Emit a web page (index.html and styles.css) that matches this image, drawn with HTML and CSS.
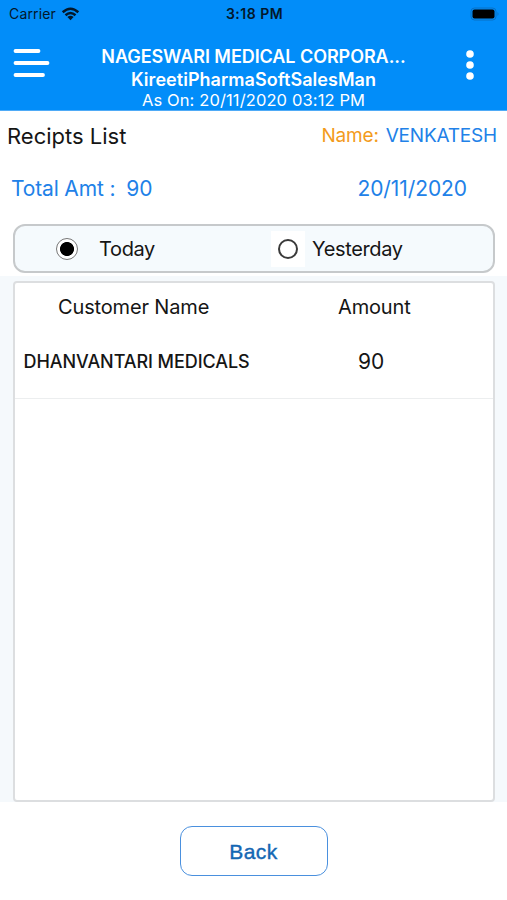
FILE: index.html
```
<!DOCTYPE html>
<html>

	<head>
		<meta charset="UTF-8">
		<title>Recipts List</title>
		<link rel="stylesheet" href="styles.css">
	</head>

	<body>
		<div id="header">
			<div class="status">
				<div class="carrier">
					<span>Carrier</span>
					<svg class="wifi" width="19" height="14" viewBox="0 0 18 14">
						<path d="M1.2 5.2Q9 -1.8 16.8 5.2M4 8.3Q9 3.8 14 8.3" fill="none" stroke="#03182b" stroke-width="2.5" />
						<path d="M9 13.2L5.9 10.1Q9 7.6 12.1 10.1Z" fill="#03182b" />
					</svg>
				</div>
				<span class="time">3:18 PM</span>
				<svg class="battery" width="30" height="14" viewBox="0 0 30 14">
					<rect x="1" y="1" width="25" height="12" rx="3.5" fill="none" stroke="#0870c4" />
					<rect x="2.5" y="2.5" width="22" height="9" rx="2" fill="#000" />
					<path d="M27.5 5Q29.5 7 27.5 9Z" fill="#0870c4" />
				</svg>
			</div>
			<div class="bar">
				<svg class="menu" width="38" height="32" viewBox="0 0 38 32">
					<path d="M3.5 4H26.5M3.5 16H35.5M3.5 28H31" stroke="#fff" stroke-width="3.8" stroke-linecap="round" />
				</svg>
				<div class="title">
					<p class="company">NAGESWARI MEDICAL CORPORA...</p>
					<p class="user">KireetiPharmaSoftSalesMan</p>
					<p class="ason">As On: 20/11/2020 03:12 PM</p>
				</div>
				<svg class="more" width="10" height="32" viewBox="0 0 10 32">
					<circle cx="5" cy="5" r="3.8" fill="#fff" />
					<circle cx="5" cy="16" r="3.8" fill="#fff" />
					<circle cx="5" cy="27" r="3.8" fill="#fff" />
				</svg>
			</div>
		</div>

		<div class="row heading">
			<span class="page">Recipts List</span>
			<span class="name"><em>Name:</em><b>VENKATESH</b></span>
		</div>
		<div class="row total">
			<span class="amt">Total Amt :<b>90</b></span>
			<span class="date">20/11/2020</span>
		</div>

		<div class="days">
			<label class="today"><i class="radio on"></i><span>Today</span></label>
			<label class="yesterday"><i class="radio"></i><span>Yesterday</span></label>
		</div>

		<div class="listwrap">
			<div class="list">
				<div class="line head">
					<span class="customer">Customer Name</span>
					<span class="amount">Amount</span>
				</div>
				<div class="line item">
					<span class="customer">DHANVANTARI MEDICALS</span>
					<span class="amount">90</span>
				</div>
			</div>
		</div>

		<button class="back">Back</button>
	</body>

</html>
```
FILE: styles.css
```
* {
	box-sizing: border-box;
}

body {
	margin: 0;
	height: 900px;
	overflow: hidden;
	background: #fff;
	color: #151515;
	font-family: "Inter", "Liberation Sans", sans-serif;
	white-space: nowrap;
}

p {
	margin: 0;
}

b, em, i {
	font-weight: normal;
	font-style: normal;
}

#header {
	height: 111px;
	background: #028df9;
	border-bottom: 1px solid #4fabf7;
}

/* status bar */
#header .status {
	display: grid;
	grid-template-columns: 1fr auto 1fr;
	align-items: center;
	height: 27px;
	padding: 0 7px 0 9px;
	color: #03182b;
	font-size: 14px;
}

#header .carrier {
	display: flex;
	align-items: center;
	gap: 5px;
	letter-spacing: 0.15px;
}

#header .time {
	font-weight: 600;
	letter-spacing: 0.5px;
}

#header .battery {
	justify-self: end;
}

/* title bar */
#header .bar {
	display: grid;
	grid-template-columns: 50px 1fr 50px;
	padding: 0 12px;
	color: #fff;
}

#header .menu {
	margin-top: 20px;
}

#header .more {
	margin: 22px 20px 0 auto;
}

#header .title {
	padding-top: 18px;
	text-align: center;
}

#header .company {
	font-size: 18px;
	font-weight: 600;
	line-height: 23px;
	letter-spacing: -0.06px;
}

#header .user {
	font-size: 18px;
	font-weight: 600;
	line-height: 23px;
	letter-spacing: 0.04px;
}

#header .ason {
	font-size: 16.5px;
	line-height: 19px;
	letter-spacing: 0.12px;
}

.row {
	display: flex;
	justify-content: space-between;
	align-items: center;
}

.heading {
	height: 49px;
	padding: 0 10px 0 7px;
	font-size: 22px;
}

.heading .name {
	font-size: 19px;
	letter-spacing: -0.2px;
	color: #2181e8;
}

.heading em {
	margin-right: 7px;
	color: #f39b1c;
}

.total {
	height: 55px;
	padding: 2px 40px 0 11px;
	font-size: 21px;
	letter-spacing: -0.15px;
	color: #2181e8;
}

.total b {
	margin-left: 11px;
}

.total .date {
	letter-spacing: -0.08px;
}

/* day switch */
.days {
	display: flex;
	align-items: center;
	height: 49px;
	margin: 9px 12px 0 13px;
	border: 2px solid #c6c9cb;
	border-radius: 12px;
	background: #f5fafd;
	font-size: 20px;
	letter-spacing: -0.35px;
}

.days label {
	display: flex;
	align-items: center;
}

.days .today {
	width: 256px;
	padding-left: 41px;
}

.days .today span {
	margin-left: 21px;
}

.days .yesterday span {
	margin-left: 7px;
}

.radio {
	width: 22px;
	height: 22px;
	border: 2px solid #333;
	border-radius: 50%;
	background: #fff;
}

.days .yesterday .radio {
	width: 34px;
	height: 36px;
	padding: 8px 7px;
	border: 0;
	border-radius: 0;
}

.days .yesterday .radio:before {
	content: "";
	display: block;
	box-sizing: border-box;
	width: 20px;
	height: 20px;
	border: 2px solid #3a3a3a;
	border-radius: 50%;
}

.radio.on {
	border: 1px solid #777;
	background: radial-gradient(circle, #000 6.6px, #fff 7.4px);
}

/* receipts */
.listwrap {
	height: 526px;
	margin-top: 3px;
	padding: 5px 12px 0 13px;
	background: #f5f9fc;
}

.list {
	height: 521px;
	border: 2px solid #dcdee0;
	border-radius: 4px;
	background: #fff;
}

.line {
	display: flex;
	align-items: center;
}

.line.head {
	height: 47px;
	font-size: 20px;
	letter-spacing: -0.15px;
}

.head .customer {
	width: 323px;
	padding-left: 43px;
}

.line.item {
	height: 69px;
	padding-bottom: 5px;
	border-bottom: 1px solid #eceeef;
}

.item .customer {
	width: 343px;
	padding-left: 8.5px;
	font-size: 18px;
	font-weight: 500;
	letter-spacing: -0.07px;
}

.item .amount {
	font-size: 21px;
}

.back {
	display: block;
	width: 148px;
	height: 50px;
	margin: 24px auto 0;
	padding: 2px 0 0;
	border: 1.5px solid #4a90de;
	border-radius: 12px;
	background: #fff;
	color: #1467b3;
	font-family: "Liberation Sans", Arial, sans-serif;
	font-size: 21px;
	letter-spacing: 0.4px;
	-webkit-text-stroke: 0.4px #1467b3;
}
```
